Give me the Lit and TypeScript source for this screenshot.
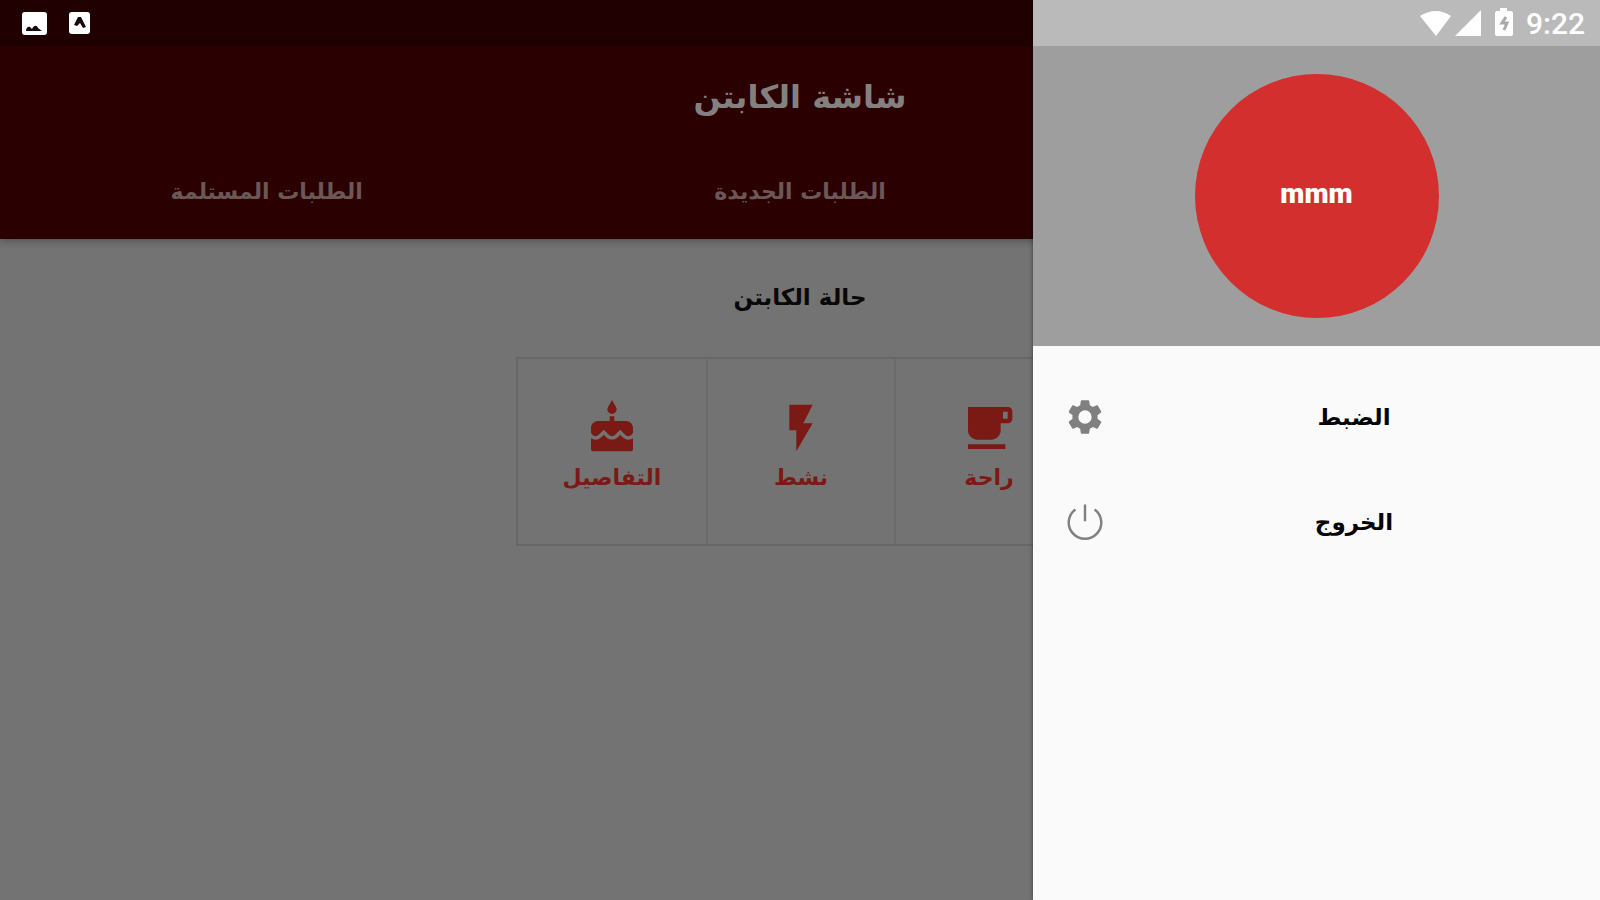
import { LitElement, html, css, svg } from "lit";
import { customElement, state } from "lit/decorators.js";

const icons = {
  cake: svg`<path d="M12 6c1.11 0 2-.9 2-2 0-.38-.1-.73-.29-1.03L12 0l-1.71 2.97c-.19.3-.29.65-.29 1.03 0 1.1.9 2 2 2zm4.6 9.99l-1.07-1.07-1.08 1.07c-1.3 1.3-3.58 1.31-4.89 0l-1.07-1.07-1.09 1.07C6.75 16.64 5.88 17 4.96 17c-.73 0-1.4-.23-1.96-.61V21c0 .55.45 1 1 1h16c.55 0 1-.45 1-1v-4.61c-.56.38-1.23.61-1.96.61-.92 0-1.79-.36-2.44-1.01zM18 9h-5V7h-2v2H6c-1.66 0-3 1.34-3 3v1.54c0 1.08.88 1.96 1.96 1.96.52 0 1.02-.2 1.38-.57l2.14-2.13 2.13 2.13c.74.74 2.03.74 2.77 0l2.14-2.13 2.13 2.13c.37.37.86.57 1.38.57 1.08 0 1.96-.88 1.96-1.96V12C21 10.34 19.66 9 18 9z"/>`,
  flash: svg`<path d="M7 2v11h3v9l7-12h-4l4-8z"/>`,
  cup: svg`<path d="M20 3H3v10c0 2.210 1.790 4 4 4h6c2.210 0 4-1.790 4-4v-3h3c1.110 0 2-.890 2-2V5c0-1.110-.890-2-2-2zm0 5h-2V5h2v3zM3 21h16v-2H3v2z"/>`,
  gear: svg`<path d="M19.140 12.940c.040-.3.060-.610.060-.940 0-.320-.020-.640-.070-.940l2.030-1.580c.180-.140.230-.410.120-.610l-1.920-3.320c-.120-.220-.370-.290-.590-.220l-2.390.960c-.5-.380-1.030-.7-1.620-.940L14.400 2.810c-.040-.240-.240-.410-.480-.410h-3.840c-.240 0-.430.170-.470.410L9.250 5.350C8.660 5.590 8.120 5.920 7.630 6.290L5.240 5.330c-.220-.080-.470 0-.590.220L2.740 8.870c-.120.210-.080.470.120.610l2.030 1.580C4.840 11.360 4.800 11.690 4.800 12s.020.640.070.940l-2.030 1.580c-.180.140-.230.410-.120.610l1.920 3.320c.120.220.370.290.590.220l2.390-.960c.5.380 1.030.7 1.620.940l.360 2.540c.050.240.240.410.480.410h3.840c.240 0 .440-.170.470-.410l.360-2.540c.590-.240 1.130-.560 1.620-.940l2.390.960c.220.080.470 0 .590-.220l1.920-3.320c.120-.220.070-.470-.120-.610l-2.010-1.580zM12 15.800a3.800 3.800 0 1 1 0-7.600 3.800 3.800 0 0 1 0 7.600z"/>`,
  power: svg`<path d="M12 2v9.500M6.500 4.800a9.300 9.300 0 1 0 11 0" fill="none" stroke="currentColor" stroke-width="1.400"/>`,
};

const icon = (shape: unknown, cls: string) =>
  html`<svg class=${cls} viewBox="0 0 24 24" fill="currentColor" aria-hidden="true">${shape}</svg>`;

@customElement("app-root")
export class AppRoot extends LitElement {
  @state() private tab = 1;

  private tabs = ["الطلبات المستلمة", "الطلبات الجديدة"];
  private states = [
    { label: "التفاصيل", shape: icons.cake },
    { label: "نشط", shape: icons.flash },
    { label: "راحة", shape: icons.cup },
  ];
  private menu = [
    { label: "الضبط", shape: icons.gear },
    { label: "الخروج", shape: icons.power },
  ];

  static styles = css`
    :host {
      display: block;
      position: relative;
      min-height: 100vh;
      overflow: hidden;
      background: #737373;
      font-family: "DejaVu Sans", sans-serif;
      font-weight: 700;
    }
    * { box-sizing: border-box; }
    button {
      margin: 0;
      padding: 0;
      border: 0;
      background: none;
      font: inherit;
      color: inherit;
      cursor: pointer;
    }
    .status {
      display: flex;
      align-items: center;
      height: 46px;
      padding: 2px 20px 0;
      gap: 20px;
      background: #200000;
    }
    .notice { width: 28px; height: 28px; }
    .header {
      background: #2b0000;
      color: #858080;
      box-shadow: 0 2px 8px rgba(0, 0, 0, 0.3);
    }
    .title {
      margin: 0;
      height: 98px;
      padding-top: 2px;
      line-height: 98px;
      font-size: 32px;
      text-align: center;
    }
    .tabs {
      display: grid;
      grid-template-columns: repeat(3, 1fr);
      height: 95px;
    }
    .tab { font-size: 22px; color: #6b5757; }
    .heading {
      margin: 0;
      padding: 40px 0 42px;
      line-height: 36px;
      font-size: 23px;
      text-align: center;
      color: #080808;
    }
    .toggles {
      display: grid;
      grid-template-columns: repeat(3, 188px);
      width: max-content;
      margin: 0 auto;
      border: 2px solid #676767;
    }
    .toggle {
      display: flex;
      flex-direction: column;
      align-items: center;
      justify-content: center;
      height: 185px;
      gap: 4px;
      padding-bottom: 8px;
      font-size: 22px;
      line-height: 36px;
      color: #7b1a14;
    }
    .toggle + .toggle { border-left: 2px solid #6b6b6b; }
    .toggle-icon { width: 56px; height: 56px; }
    .drawer {
      position: absolute;
      inset: 0 0 0 auto;
      width: 567px;
      max-width: 90%;
      background: #fafafa;
      box-shadow: 0 0 4px rgba(0, 0, 0, 0.5);
    }
    .system {
      display: flex;
      align-items: center;
      justify-content: flex-end;
      height: 46px;
      padding: 2px 15px 0 0;
      gap: 3px;
      background: #bababa;
      color: #fff;
    }
    .signal { width: 32px; height: 32px; }
    .clock {
      margin-left: 2px;
      font: 500 30px/46px Roboto, sans-serif;
    }
    .profile {
      display: flex;
      align-items: center;
      justify-content: center;
      height: 300px;
      background: #9e9e9e;
    }
    .avatar {
      display: flex;
      align-items: center;
      justify-content: center;
      width: 244px;
      height: 244px;
      padding-bottom: 5px;
      border-radius: 50%;
      background: #d32f2f;
      color: #fff;
      font-family: Roboto, sans-serif;
      font-size: 28px;
      font-weight: 900;
    }
    .menu { padding-top: 18px; }
    .item {
      display: grid;
      grid-template-columns: 44px 1fr;
      align-items: center;
      gap: 33px;
      width: 100%;
      height: 105px;
      padding: 0 32px 0 30px;
      font-size: 23px;
      color: #050505;
    }
    .item-icon { justify-self: center; width: 42px; height: 42px; color: #808080; }
  `;

  render() {
    return html`
      <div class="status">
        <svg class="notice" viewBox="0 0 28 28" aria-hidden="true">
          <rect x="2" y="2" width="25" height="23" rx="3" fill="#fff"/>
          <path d="M6 21c0-3 2-5 4-4l2 2c2-4 5-4 6-1l4 3z" fill="#180808"/>
        </svg>
        <svg class="notice" viewBox="0 0 28 28" aria-hidden="true">
          <rect x="1" y="2" width="21" height="22" rx="3" fill="#fff"/>
          <path d="M6 15l4-8h3l5 10-3 1-3-5-3 3z" fill="#180808"/>
        </svg>
      </div>
      <header class="header">
        <h1 class="title" dir="rtl">شاشة الكابتن</h1>
        <nav class="tabs">
          ${this.tabs.map((t, i) => html`<button class="tab" dir="rtl" aria-pressed=${this.tab === i} @click=${() => (this.tab = i)}>${t}</button>`)}
        </nav>
      </header>
      <main>
        <h2 class="heading" dir="rtl">حالة الكابتن</h2>
        <div class="toggles">
          ${this.states.map((s) => html`<button class="toggle">${icon(s.shape, "toggle-icon")}<span>${s.label}</span></button>`)}
        </div>
      </main>
      <aside class="drawer">
        <div class="system">
          <svg class="signal" viewBox="0 0 32 32" fill="currentColor" aria-hidden="true"><path d="M1 8Q17-2 32 8L17 28z"/></svg>
          <svg class="signal" viewBox="0 0 32 32" fill="currentColor" aria-hidden="true"><path d="M27 2v26H1z"/></svg>
          <svg class="signal" viewBox="0 0 32 32" aria-hidden="true"><path d="M11 0h7v3h4q2 0 2 2v21q0 2-2 2H8q-2 0-2-2V5q0-2 2-2h3z" fill="currentColor"/><path d="M17 9l-4 6h5l-3 7" fill="none" stroke="#aaa" stroke-width="3"/></svg>
          <span class="clock">9:22</span>
        </div>
        <div class="profile"><div class="avatar">mmm</div></div>
        <nav class="menu">
          ${this.menu.map((m) => html`<button class="item">${icon(m.shape, "item-icon")}<span>${m.label}</span></button>`)}
        </nav>
      </aside>
    `;
  }
}
